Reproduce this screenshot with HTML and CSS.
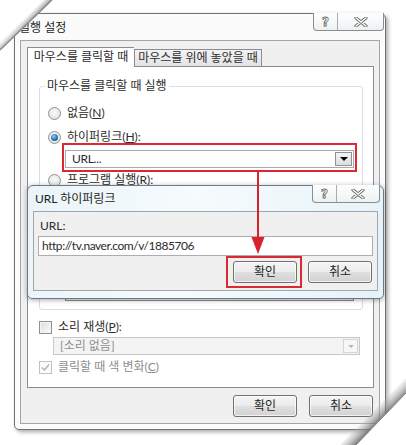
FILE: index.html
```html
<!DOCTYPE html>
<html lang="ko">
<head>
<meta charset="utf-8">
<title>실행 설정</title>
<link rel="stylesheet" href="styles.css">
</head>
<body>
<div class="stage">
  <div class="window main-window">
    <div class="titlebar">
      <span class="title">실행 설정</span>
      <div class="caption-btns">
        <span class="cap-btn help">?</span>
        <span class="cap-btn close">
          <svg width="14" height="10" viewBox="0 0 14 10"><path d="M2 1 L12 9 M12 1 L2 9" class="x-out"/><path d="M2 1 L12 9 M12 1 L2 9" class="x-in"/></svg>
        </span>
      </div>
    </div>
    <div class="client">
      <div class="tabs">
        <div class="tab active">마우스를 클릭할 때</div>
        <div class="tab">마우스를 위에 놓았을 때</div>
      </div>
      <div class="panel">
        <fieldset class="group">
          <legend>마우스를 클릭할 때 실행</legend>
          <div class="opt"><span class="radio"></span><span>없음(<u>N</u>)</span></div>
          <div class="opt gap8"><span class="radio checked"></span><span>하이퍼링크(<u>H</u>):</span></div>
          <div class="combo url-combo"><span class="combo-text">URL...</span><span class="drop"><span class="tri"></span></span></div>
          <div class="opt gap4"><span class="radio"></span><span>프로그램 실행(<u>R</u>):</span></div>
          <div class="combo prog-combo"><span class="combo-text"></span><span class="drop"><span class="tri"></span></span></div>
        </fieldset>
        <div class="opt sound-row"><span class="checkbox"></span><span>소리 재생(<u>P</u>):</span></div>
        <div class="combo sound-combo"><span class="combo-text">[소리 없음]</span><span class="drop"><span class="tri"></span></span></div>
        <div class="opt color-row disabled"><span class="checkbox checked"><svg width="9" height="9" viewBox="0 0 9 9"><path d="M1 4.5 L3.5 7 L8 1.5"/></svg></span><span>클릭할 때 색 변화(<u>C</u>)</span></div>
      </div>
      <div class="btn-row">
        <span class="btn">확인</span>
        <span class="btn">취소</span>
      </div>
    </div>
  </div>

  <div class="window sub-window">
    <div class="titlebar sub-titlebar">
      <span class="title">URL 하이퍼링크</span>
      <div class="caption-btns sub-caps">
        <span class="cap-btn help">?</span>
        <span class="cap-btn close">
          <svg width="14" height="10" viewBox="0 0 14 10"><path d="M2 1 L12 9 M12 1 L2 9" class="x-out"/><path d="M2 1 L12 9 M12 1 L2 9" class="x-in"/></svg>
        </span>
      </div>
    </div>
    <div class="client sub-client">
      <div class="field-label">URL:</div>
      <div class="textbox">http://tv.naver.com/v/1885706</div>
      <div class="btn-row sub-btns">
        <span class="btn">확인</span>
        <span class="btn">취소</span>
      </div>
    </div>
  </div>

  <div class="mark mark-combo"></div>
  <div class="mark mark-ok"></div>
  <svg class="arrow" width="16" height="86" viewBox="0 0 16 86">
    <line x1="8" y1="2" x2="8" y2="70" stroke="#d8232e" stroke-width="2"/>
    <polygon points="1.5,67 14.5,67 8,84" fill="#d8232e"/>
  </svg>

  <svg class="curl" width="406" height="445" viewBox="0 0 406 445">
    <defs>
      <linearGradient id="tlShade" gradientUnits="userSpaceOnUse" x1="26" y1="25" x2="20" y2="19">
        <stop offset="0" stop-color="#8a8a8a" stop-opacity="0.8"/>
        <stop offset="1" stop-color="#ffffff" stop-opacity="0"/>
      </linearGradient>
      <linearGradient id="brShade" gradientUnits="userSpaceOnUse" x1="381" y1="419" x2="371" y2="409">
        <stop offset="0" stop-color="#6a6a6a" stop-opacity="0.85"/>
        <stop offset="1" stop-color="#cfcfcf" stop-opacity="0"/>
      </linearGradient>
    </defs>
    <polygon points="0,0 52,0 0,50" fill="#ffffff"/>
    <polygon points="0,50 52,0 44,0 0,42" fill="url(#tlShade)"/>
    <line x1="0" y1="50" x2="52" y2="0" stroke="#8a8a8a" stroke-width="1.3"/>
    <polygon points="356,445 406,393 406,445" fill="#ffffff"/>
    <polygon points="356,445 406,393 406,378 340,445" fill="url(#brShade)"/>
    <line x1="356" y1="445" x2="406" y2="393" stroke="#8a8a8a" stroke-width="1"/>
  </svg>
</div>
</body>
</html>
```

FILE: styles.css
```css
* { box-sizing: border-box; }

html, body {
  margin: 0;
  padding: 0;
  background: #ffffff;
}

body {
  font-family: "Lato", "Noto Sans CJK KR", sans-serif;
  font-size: 12px;
  line-height: 16px;
  color: #2c2c2c;
}

.stage {
  position: relative;
  width: 406px;
  height: 445px;
  overflow: hidden;
  padding: 13px 0 0 14px;
}

.window {
  border: 1px solid #6f7377;
  border-radius: 6px 6px 5px 5px;
  display: flex;
  flex-direction: column;
}

.main-window {
  width: 372px;
  height: 417px;
  background: #fbfbfb;
  box-shadow: 2px 2px 4px rgba(0, 0, 0, 0.35);
}

.titlebar {
  height: 26px;
  display: flex;
  align-items: flex-start;
  flex: none;
}

.title {
  margin: 6px 0 0 4px;
  color: #1e1e1e;
}

.caption-btns {
  margin: -1px 0 0 auto;
  display: flex;
  height: 18px;
  border: 1px solid #8a8d90;
  border-top: none;
  border-radius: 0 0 4px 4px;
  background: linear-gradient(#fefefe, #eef1f3);
  overflow: hidden;
}

.main-window .caption-btns { margin-right: 1px; }

.cap-btn {
  display: flex;
  align-items: center;
  justify-content: center;
  height: 100%;
}

.cap-btn.help {
  width: 24px;
  border-right: 1px solid #a9adb0;
  font-weight: bold;
  font-size: 12px;
  color: #ffffff;
  -webkit-text-stroke: 0.8px #6a6a6a;
  font-family: "DejaVu Sans", sans-serif;
}

.cap-btn.close { width: 45px; }

.x-out { stroke: #707070; stroke-width: 3.2; stroke-linecap: round; fill: none; }
.x-in { stroke: #ffffff; stroke-width: 1.3; stroke-linecap: round; fill: none; }

.client {
  margin: 0 5px;
  height: 384px;
  border: 1px solid #a5a5a5;
  background: #f0f0f0;
  padding: 6px 5px 0 6px;
  display: flex;
  flex-direction: column;
}

.tabs {
  display: flex;
  align-items: flex-end;
  height: 19px;
  position: relative;
  z-index: 1;
}

.tab {
  height: 17px;
  width: 128px;
  border: 1px solid #898c95;
  border-bottom: none;
  background: linear-gradient(#f3f3f3, #e3e3e3);
  text-align: center;
  line-height: 15px;
}

.tab.active {
  width: 107px;
  height: 20px;
  margin-bottom: -1px;
  background: #ffffff;
  line-height: 18px;
  border-right: none;
}

.panel {
  height: 322px;
  border: 1px solid #898c95;
  background: #ffffff;
  padding: 0 10px 0 11px;
  display: flex;
  flex-direction: column;
}

.group {
  margin: 11px 0 0 0;
  padding: 11px 8px 8px 8px;
  border: 1px solid #d5dfe5;
  border-radius: 3px;
  display: flex;
  flex-direction: column;
  min-width: 0;
}

.group legend {
  padding: 0 2px;
  margin-left: -3px;
  line-height: 16px;
}

.opt {
  display: flex;
  align-items: center;
  height: 16px;
  gap: 6px;
}

.gap8 { margin-top: 8px; }
.gap4 { margin-top: 4px; }

.radio {
  width: 13px;
  height: 13px;
  border-radius: 50%;
  border: 1px solid #8e8f8f;
  background: radial-gradient(circle at 50% 40%, #fafafa, #dcdcdc);
  display: flex;
  align-items: center;
  justify-content: center;
  flex: none;
}

.radio.checked::after {
  content: "";
  width: 7px;
  height: 7px;
  border-radius: 50%;
  background: radial-gradient(circle at 40% 35%, #8fd0f0, #1d6ba8 60%, #0e3f73);
}

.checkbox {
  width: 13px;
  height: 13px;
  border: 1px solid #8f8f8f;
  background: linear-gradient(135deg, #dcdcdc, #fbfbfb);
  box-shadow: inset 0 0 0 1px #f4f4f4;
  flex: none;
  display: flex;
  align-items: center;
  justify-content: center;
}

.checkbox.checked {
  border-color: #c2c2c2;
  background: #fbfbfb;
  box-shadow: none;
}

.checkbox svg path {
  fill: none;
  stroke: #b0b0b0;
  stroke-width: 1.4;
}

.combo {
  height: 18px;
  border: 1px solid #a6abb2;
  background: #ffffff;
  display: flex;
  align-items: center;
  padding-left: 6px;
}

.combo-text { flex: 1; line-height: 16px; }

.drop {
  width: 17px;
  height: 14px;
  margin-right: 1px;
  border: 1px solid #8e9296;
  background: linear-gradient(#f4f4f4, #dcdcdc);
  display: flex;
  align-items: center;
  justify-content: center;
}

.tri {
  width: 0;
  height: 0;
  border-left: 4px solid transparent;
  border-right: 4px solid transparent;
  border-top: 4px solid #000000;
}

.url-combo {
  margin: 5px 0 0 17px;
}

.url-combo .combo-text { letter-spacing: -0.3px; }

.prog-combo {
  margin: 95px 0 0 17px;
  border-color: #8e8e8e;
  background: #f4f4f4;
}

.sound-row { margin-top: 9px; }

.sound-combo {
  margin: 2px 3px 0 14px;
  border-color: #c8c8c8;
  background: #f4f4f4;
  color: #8d8d8d;
}

.sound-combo .drop {
  border-color: #d4d4d4;
  background: #f7f7f7;
  width: 15px;
}

.sound-combo .tri { border-top-color: #b8b8b8; border-left-width: 3px; border-right-width: 3px; border-top-width: 3px; }

.color-row { margin-top: 4px; }

.disabled { color: #8d8d8d; }

.btn-row {
  display: flex;
  justify-content: flex-end;
  gap: 12px;
  margin-top: 7px;
  padding-right: 1px;
}

.btn {
  width: 64px;
  height: 22px;
  border: 1px solid #707070;
  border-radius: 3px;
  background: linear-gradient(#f4f4f4 0%, #ececec 48%, #dfdfdf 52%, #d2d2d2 100%);
  box-shadow: inset 0 0 0 1px rgba(255, 255, 255, 0.7);
  display: flex;
  align-items: center;
  justify-content: center;
  color: #1e1e1e;
}

/* sub dialog */
.sub-window {
  position: absolute;
  left: 27px;
  top: 185px;
  width: 357px;
  height: 114px;
  background: linear-gradient(100deg, #eaf4f9 0%, #f6fbfd 45%, #e6f2f8 100%);
  border-color: #6a7985;
  box-shadow: 0 1px 5px rgba(0, 0, 0, 0.35);
  z-index: 2;
}

.sub-titlebar { height: 25px; }

.sub-titlebar .title { margin: 5px 0 0 7px; }

.sub-caps { margin-right: 3px; }

.sub-caps .cap-btn.close { width: 42px; }

.sub-client {
  height: 80px;
  padding: 6px 4px 0 4px;
  border-color: #9ea7ae;
}

.field-label {
  margin-left: 2px;
  height: 16px;
}

.textbox {
  margin-top: 2px;
  height: 20px;
  border: 1px solid #abadb3;
  background: #ffffff;
  padding-left: 3px;
  line-height: 18px;
  letter-spacing: -0.45px;
}

.sub-btns {
  margin-top: 5px;
  gap: 11px;
}

/* annotations */
.mark {
  position: absolute;
  border: 2px solid #dc2832;
  z-index: 3;
}

.mark-combo { left: 62px; top: 143px; width: 295px; height: 29px; z-index: 1; }

.mark-ok { left: 226px; top: 256px; width: 76px; height: 32px; }

.arrow {
  position: absolute;
  left: 250px;
  top: 170px;
  z-index: 4;
}

.curl {
  position: absolute;
  left: 0;
  top: 0;
  z-index: 5;
  pointer-events: none;
}
```
